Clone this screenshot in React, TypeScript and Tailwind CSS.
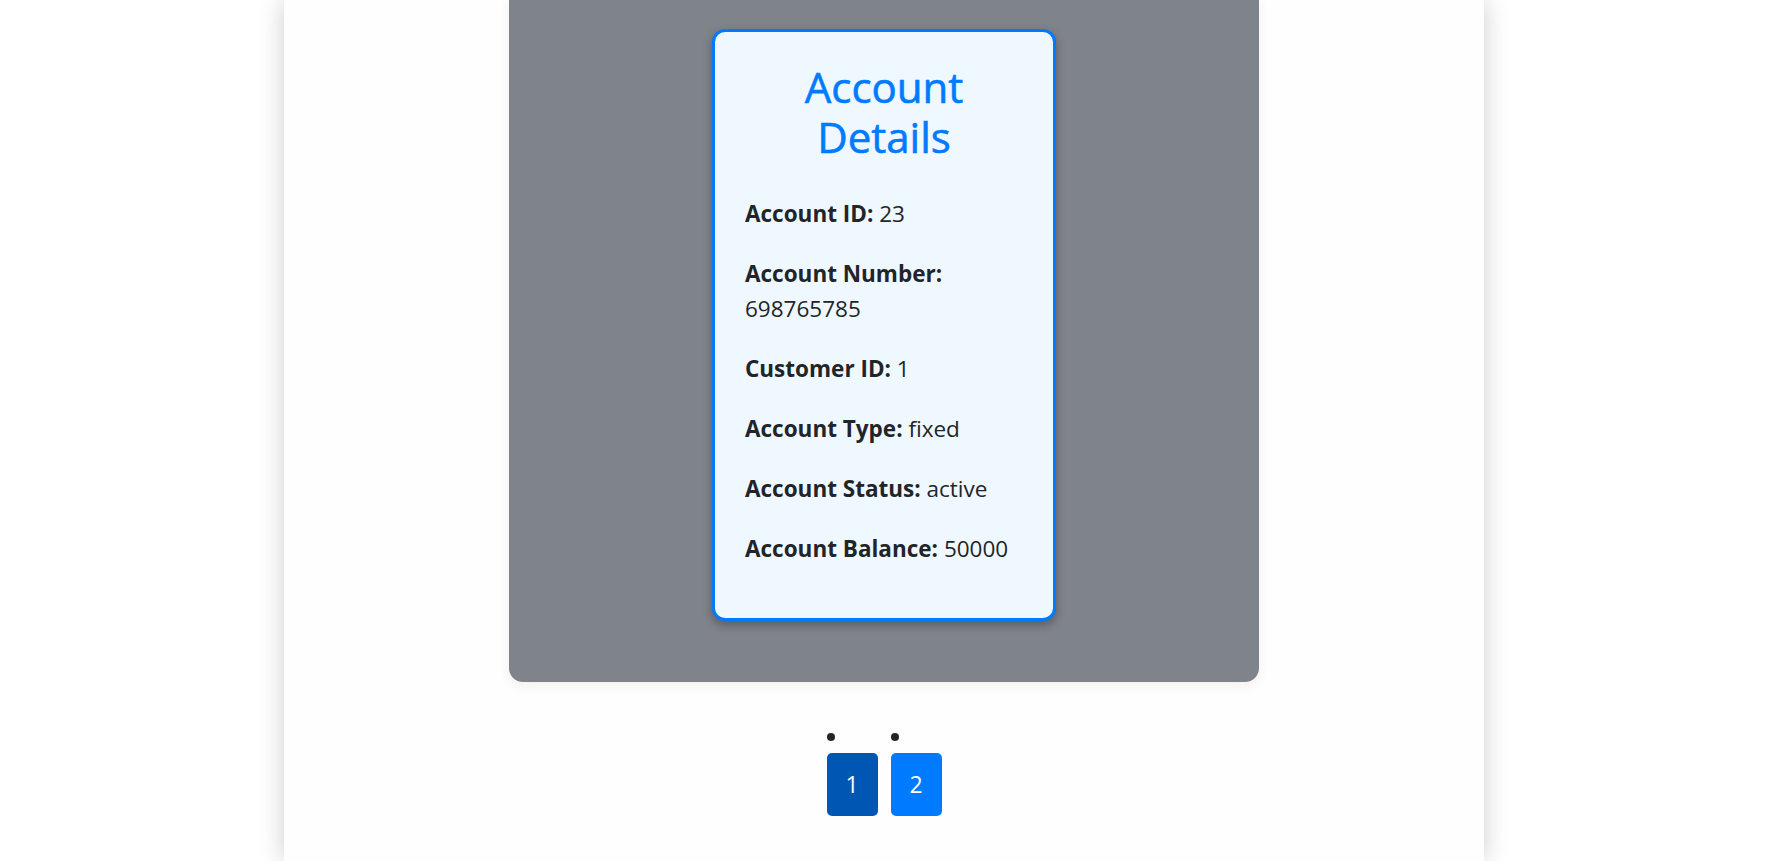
import React from "react";

const rows: { label: string; value: string }[] = [
  { label: "Account ID:", value: "23" },
  { label: "Account Number:", value: "698765785" },
  { label: "Customer ID:", value: "1" },
  { label: "Account Type:", value: "fixed" },
  { label: "Account Status:", value: "active" },
  { label: "Account Balance:", value: "50000" },
];

export default function App() {
  return (
    <div
      className="min-h-[861px] w-[1768px] bg-white"
      style={{ fontFamily: '"Open Sans", "Noto Sans", sans-serif' }}
    >
      <div className="mx-auto flex min-h-[861px] w-[1200px] flex-col items-center bg-[#fefefe] shadow-[0_0_24px_rgba(0,0,0,0.2)]">
        <div className="flex w-[750px] justify-center rounded-b-[14px] bg-[#7f838a] pt-[29px] pb-[61px] shadow-[0_4px_12px_rgba(120,60,60,0.08)]">
          <div className="w-[344px] rounded-[13px] border-[3px] border-[#007bff] bg-[#f0f8ff] px-[30px] pt-[30px] pb-[27px] text-[#212529] shadow-[0_4px_10px_rgba(0,0,0,0.3)]">
            <h2 className="mb-[34px] text-center text-[42px] leading-[50px] font-normal text-[#007bff] [-webkit-text-stroke:0.6px_#007bff]">
              Account Details
            </h2>
            {rows.map((r) => (
              <p key={r.label} className="mb-[25px] text-[22.5px] leading-[35px]">
                <strong className="font-bold">{r.label}</strong> {r.value}
              </p>
            ))}
          </div>
        </div>
        <ul className="mt-[51px] flex gap-[13px]">
          {["1", "2"].map((n, i) => (
            <li key={n} className="flex flex-col items-start">
              <span className="mb-[12px] h-[8px] w-[8px] rounded-full bg-[#212529]" />
              <button
                className={
                  i === 0
                    ? "flex h-[63px] w-[51px] items-center justify-center rounded-[5px] bg-[#0056b3] text-[23px] text-white"
                    : "flex h-[63px] w-[51px] items-center justify-center rounded-[5px] bg-[#007bff] text-[23px] text-white"
                }
              >
                {n}
              </button>
            </li>
          ))}
        </ul>
      </div>
    </div>
  );
}
